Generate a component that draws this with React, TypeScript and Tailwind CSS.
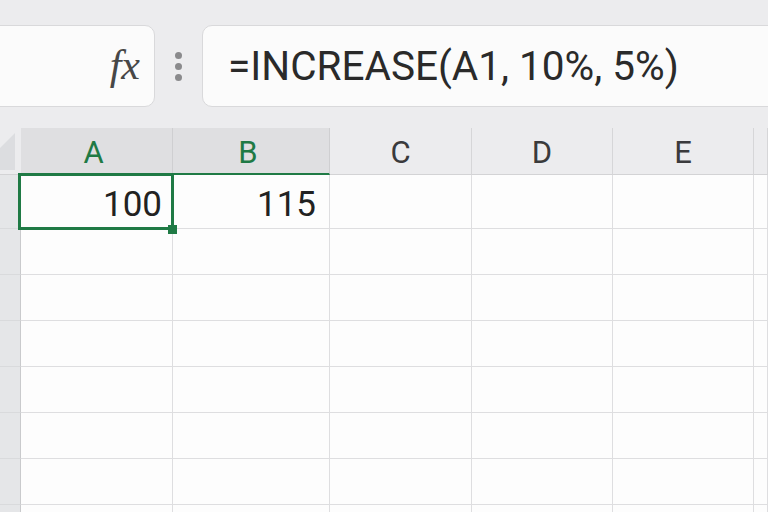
import React from 'react';

const cols = ['A', 'B', 'C', 'D', 'E', 'F'];
const bodyRows = [1, 2, 3, 4, 5, 6, 7, 8];

export default function App() {
  return (
    <div
      className="w-[768px] h-[512px] overflow-hidden bg-[#ececee] text-[#2a2a2a]"
      style={{ fontFamily: 'Roboto, "Noto Sans", sans-serif' }}
    >
      {/* Formula bar */}
      <div className="flex items-stretch pt-[25px] h-[107px]">
        <div className="ml-[-12px] w-[167px] shrink-0 flex items-center justify-end pr-[14px] bg-[#fbfbfb] border border-[#d9d9db] rounded-[10px]">
          <span
            className="text-[42px] italic leading-none text-[#474747] pb-[2px]"
            style={{ fontFamily: '"Liberation Serif", serif' }}
          >
            fx
          </span>
        </div>
        <div className="w-[47px] shrink-0 flex flex-col items-center justify-center gap-[4px]">
          <span className="w-[7px] h-[7px] rounded-full bg-[#8a8a8c]" />
          <span className="w-[7px] h-[7px] rounded-full bg-[#8a8a8c]" />
          <span className="w-[7px] h-[7px] rounded-full bg-[#8a8a8c]" />
        </div>
        <div className="flex-1 mr-[-12px] flex items-center pl-[25px] bg-[#fbfbfb] border border-[#d9d9db] rounded-[10px]">
          <span className="text-[40.5px] leading-none text-[#2a2a2a]">=INCREASE(A1, 10%, 5%)</span>
        </div>
      </div>

      {/* Grid */}
      <div className="mt-[21px] grid grid-cols-[21px_152px_157px_142px_141px_141px_1fr]">
        {/* Header row */}
        <div className="h-[47px] border-b border-[#d3d3d5]">
          <svg width="21" height="47" viewBox="0 0 21 47">
            <polygon points="15,5 15,42 0,42 0,20" fill="#dcdde0" />
          </svg>
        </div>
        {cols.map((c) => {
          const sel = c === 'A' || c === 'B';
          return (
            <div
              key={c}
              className={
                sel
                  ? 'h-[47px] flex items-center justify-center bg-[#dfdfe1] border-r border-[#cfcfd1] border-b-2 border-b-[#1f7a45] text-[31px] text-[#1f7a45] leading-none'
                  : 'h-[47px] flex items-center justify-center border-r border-[#d6d6d8] border-b border-b-[#d3d3d5] text-[31px] text-[#3a3a3c] leading-none'
              }
            >
              <span className={sel ? 'pt-[3px] pr-[6px]' : 'pt-[2px]'}>{c === 'F' ? '' : c}</span>
            </div>
          );
        })}

        {/* Body rows */}
        {bodyRows.map((r) => (
          <React.Fragment key={r}>
            <div
              className={
                (r === 1 ? 'h-[54px] ' : 'h-[46px] ') +
                'bg-[#e5e6e8] border-r border-[#c9cacc] border-b border-b-[#d9dadc]'
              }
            />
            {cols.map((c) => (
              <div
                key={c}
                className={
                  (r === 1 ? 'h-[54px] ' : 'h-[46px] ') +
                  'relative bg-[#fdfdfd] border-r border-b border-[#dedee0] flex items-center justify-end'
                }
              >
                {r === 1 && c === 'A' && (
                  <>
                    <span className="pr-[10px] pt-[5px] text-[35px] leading-none text-[#222]">100</span>
                    <div className="absolute z-10 top-[-2px] left-[-3px] right-[-2px] bottom-[-2px] border-[3px] border-solid border-[#1f7a45]" />
                    <div className="absolute z-20 right-[-5px] bottom-[-6px] w-[9px] h-[9px] bg-[#1f7a45]" />
                  </>
                )}
                {r === 1 && c === 'B' && (
                  <span className="pr-[13px] pt-[5px] text-[35px] leading-none text-[#222]">115</span>
                )}
              </div>
            ))}
          </React.Fragment>
        ))}
      </div>
    </div>
  );
}
